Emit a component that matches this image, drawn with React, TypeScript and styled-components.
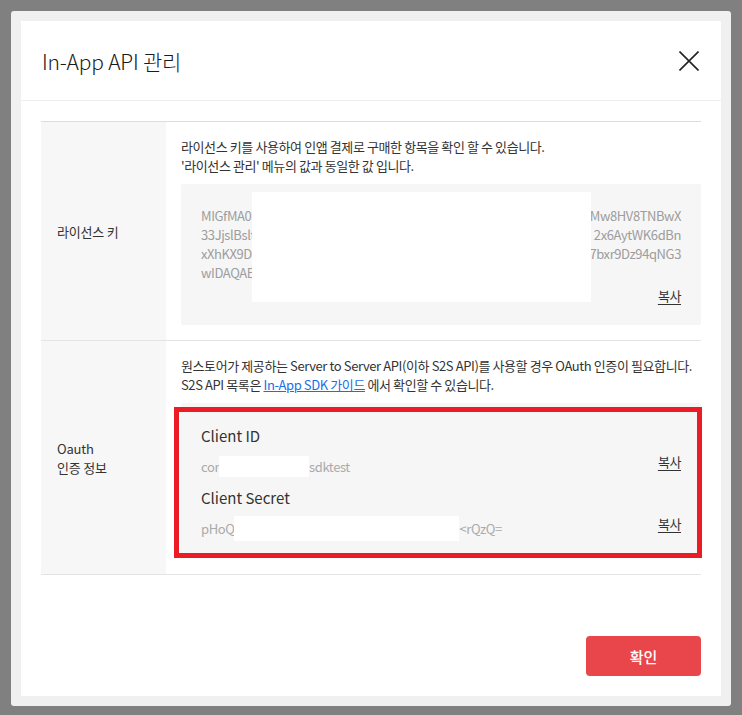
import React from "react";
import styled, { createGlobalStyle } from "styled-components";

const GlobalStyle = createGlobalStyle`
  html, body {
    margin: 0;
    padding: 0;
    background: #808080;
  }
  body {
    font-family: "Noto Sans CJK KR", "Noto Sans", sans-serif;
    color: #333;
  }
  * { box-sizing: border-box; }
`;

const Page = styled.div`
  width: 742px;
  height: 715px;
  padding: 11px;
`;

const Frame = styled.div`
  width: 720px;
  height: 695px;
  padding: 10px;
  background: #f0f0f0;
  border-radius: 3px;
`;

const Modal = styled.div`
  height: 100%;
  background: #fff;
  display: flex;
  flex-direction: column;
`;

const Header = styled.div`
  height: 80px;
  border-bottom: 1px solid #eee;
  display: flex;
  align-items: center;
  justify-content: space-between;
  padding: 0 22px 0 21px;
`;

const Title = styled.h1`
  margin: 0;
  font-size: 21px;
  font-weight: 300;
  color: #1a1a1a;
  letter-spacing: -0.2px;
`;

const CloseButton = styled.button`
  border: 0;
  background: none;
  padding: 0;
  width: 20px;
  height: 20px;
  display: flex;
  cursor: pointer;
`;

const Body = styled.div`
  padding: 20px 20px 0;
  flex: 1;
`;

const Table = styled.div`
  border-top: 1px solid #ddd;
`;

const Row = styled.div<{ $h: number }>`
  display: grid;
  grid-template-columns: 125px 1fr;
  min-height: ${(p) => p.$h}px;
  border-bottom: 1px solid #e4e4e4;
`;

const Label = styled.div`
  background: #f7f7f7;
  display: flex;
  align-items: center;
  padding-left: 16px;
  font-size: 13px;
  line-height: 19px;
  color: #333;
  letter-spacing: -0.2px;
`;

const Cell = styled.div`
  padding: 15px 0 15px 15px;
  font-size: 13px;
  line-height: 19px;
  color: #333;
  letter-spacing: -0.4px;
`;

const Desc = styled.p`
  margin: 0 0 9px;
`;

const Link = styled.a`
  color: #1a6ee6;
  text-decoration: underline;
`;

const GreyBox = styled.div<{ $pt: number; $pb: number }>`
  position: relative;
  background: #f6f6f6;
  border-radius: 2px;
  padding: ${(p) => p.$pt}px 20px ${(p) => p.$pb}px 20px;
`;

const KeyLine = styled.div`
  display: flex;
  justify-content: space-between;
  color: #9d9d9d;
  font-size: 13px;
  line-height: 19px;
  letter-spacing: -0.4px;
  white-space: nowrap;
`;

const CopyRow = styled.div`
  display: flex;
  justify-content: flex-end;
  margin-top: 4px;
`;

const Copy = styled.a`
  color: #333;
  font-size: 13px;
  line-height: 19px;
  text-decoration: underline;
  text-underline-offset: 3px;
  cursor: pointer;
`;

const Redact = styled.div`
  position: absolute;
  left: 71px;
  top: 8px;
  width: 339px;
  height: 110px;
  background: #fff;
`;

const ItemTitle = styled.div<{ $mt: number }>`
  font-size: 15px;
  line-height: 22px;
  color: #333;
  margin-top: ${(p) => p.$mt}px;
  letter-spacing: 0;
`;

const ValueRow = styled.div`
  display: flex;
  align-items: center;
  justify-content: space-between;
  height: 19px;
  margin-top: 10px;
`;

const Value = styled.div`
  display: flex;
  align-items: center;
  height: 19px;
  color: #aaa;
  font-size: 13px;
  line-height: 19px;
  letter-spacing: -0.4px;
  white-space: nowrap;
`;

const Blank = styled.span<{ $w: number; $h: number }>`
  display: inline-block;
  flex: none;
  width: ${(p) => p.$w}px;
  height: ${(p) => p.$h}px;
  margin: ${(p) => -(p.$h - 19) / 2}px 0;
  background: #fff;
`;

const ValueCopy = styled(Copy)`
  margin-top: -10px;
`;

const Highlight = styled.div`
  position: absolute;
  left: -7px;
  top: 4px;
  right: -1px;
  bottom: -1px;
  border: 5px solid #ec1c24;
  pointer-events: none;
`;

const Footer = styled.div`
  display: flex;
  justify-content: flex-end;
  padding: 0 20px 20px;
`;

const ConfirmButton = styled.button`
  width: 115px;
  height: 40px;
  border: 0;
  border-radius: 4px;
  background: #e8464a;
  color: #fff;
  font-family: "Noto Sans CJK KR", "Noto Sans", sans-serif;
  font-size: 15px;
  font-weight: 500;
  cursor: pointer;
`;

const keyLines: [string, string][] = [
  ["MIGfMA0C", "Mw8HV8TNBwX"],
  ["33JjslBslt", "2x6AytWK6dBn"],
  ["xXhKX9DI", "7bxr9Dz94qNG3"],
  ["wIDAQAB", ""],
];

export default function App() {
  return (
    <>
      <GlobalStyle />
      <Page>
        <Frame>
          <Modal>
            <Header>
              <Title>In-App API 관리</Title>
              <CloseButton aria-label="닫기">
                <svg width="20" height="20" viewBox="0 0 20 20">
                  <path d="M0.5 0.5 L19.5 19.5 M19.5 0.5 L0.5 19.5" stroke="#222" strokeWidth="1.6" fill="none" />
                </svg>
              </CloseButton>
            </Header>
            <Body>
              <Table>
                <Row $h={218}>
                  <Label>라이선스 키</Label>
                  <Cell>
                    <Desc>
                      라이선스 키를 사용하여 인앱 결제로 구매한 항목을 확인 할 수 있습니다.
                      <br />
                      '라이선스 관리' 메뉴의 값과 동일한 값 입니다.
                    </Desc>
                    <GreyBox $pt={22} $pb={20}>
                      {keyLines.map(([l, r], i) => (
                        <KeyLine key={i}>
                          <span>{l}</span>
                          <span>{r}</span>
                        </KeyLine>
                      ))}
                      <CopyRow>
                        <Copy>복사</Copy>
                      </CopyRow>
                      <Redact />
                    </GreyBox>
                  </Cell>
                </Row>
                <Row $h={234}>
                  <Label>
                    Oauth
                    <br />
                    인증 정보
                  </Label>
                  <Cell>
                    <Desc>
                      원스토어가 제공하는 Server to Server API(이하 S2S API)를 사용할 경우 OAuth 인증이 필요합니다.
                      <br />
                      S2S API 목록은 <Link href="#">In-App SDK 가이드</Link> 에서 확인할 수 있습니다.
                    </Desc>
                    <GreyBox $pt={22} $pb={19}>
                      <ItemTitle $mt={0}>Client ID</ItemTitle>
                      <ValueRow>
                        <Value>
                          cor
                          <Blank $w={90} $h={21} />
                          sdktest
                        </Value>
                        <ValueCopy>복사</ValueCopy>
                      </ValueRow>
                      <ItemTitle $mt={11}>Client Secret</ItemTitle>
                      <ValueRow>
                        <Value>
                          pHoQ
                          <Blank $w={225} $h={25} />
                          &lt;rQzQ=
                        </Value>
                        <ValueCopy>복사</ValueCopy>
                      </ValueRow>
                      <Highlight />
                    </GreyBox>
                  </Cell>
                </Row>
              </Table>
            </Body>
            <Footer>
              <ConfirmButton>확인</ConfirmButton>
            </Footer>
          </Modal>
        </Frame>
      </Page>
    </>
  );
}
